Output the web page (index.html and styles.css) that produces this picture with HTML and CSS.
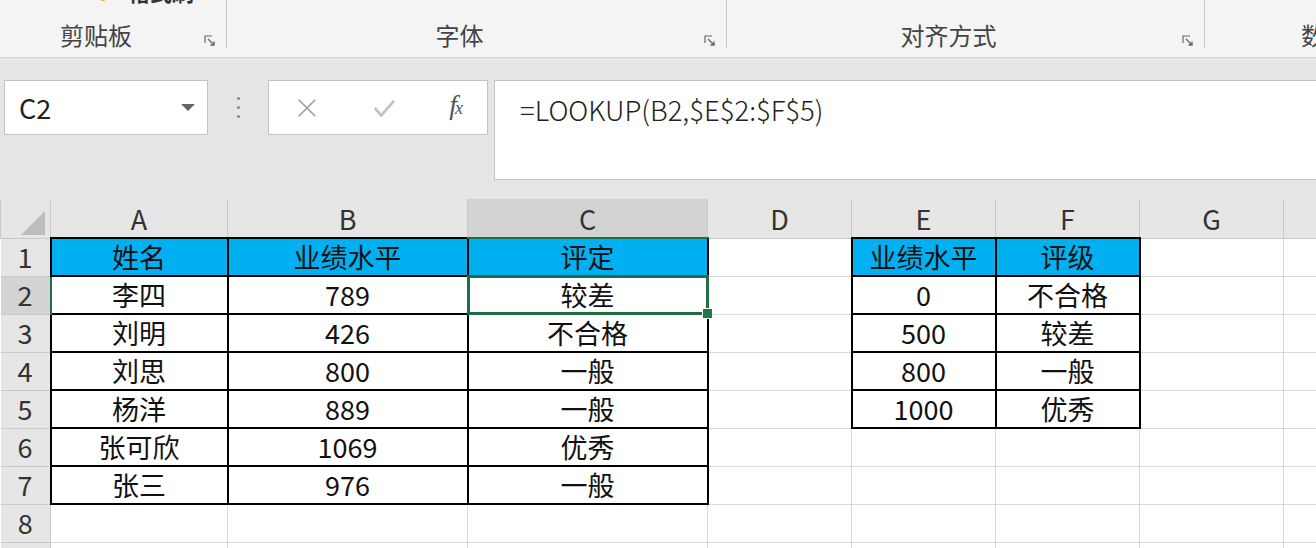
FILE: index.html
```html
<!DOCTYPE html>
<html>
    <head>
        <title>LOOKUP</title>
        <meta charset="UTF-8">
        <link rel="stylesheet" href="styles.css">
    </head>
    <body>
        <header class="ribbon">
            <div class="group group-clip">
                <div class="cut-text"><span class="cut-dot"></span>格式刷</div>
                <div class="group-label">剪贴板</div>
                <svg class="launcher" viewBox="0 0 12 12"><path d="M1 8V1h7" fill="none" stroke="#666" stroke-width="1.2"/><path d="M4 4l6 6M10 6.5V10H6.5" fill="none" stroke="#666" stroke-width="1.4"/></svg>
            </div>
            <div class="group group-font">
                <div class="group-label">字体</div>
                <svg class="launcher" viewBox="0 0 12 12"><path d="M1 8V1h7" fill="none" stroke="#666" stroke-width="1.2"/><path d="M4 4l6 6M10 6.5V10H6.5" fill="none" stroke="#666" stroke-width="1.4"/></svg>
            </div>
            <div class="group group-align">
                <div class="group-label">对齐方式</div>
                <svg class="launcher" viewBox="0 0 12 12"><path d="M1 8V1h7" fill="none" stroke="#666" stroke-width="1.2"/><path d="M4 4l6 6M10 6.5V10H6.5" fill="none" stroke="#666" stroke-width="1.4"/></svg>
            </div>
            <div class="group group-more">
                <div class="group-label">数字</div>
            </div>
        </header>

        <section class="formula-area">
            <div class="name-box">
                <span>C2</span>
                <span class="drop"></span>
            </div>
            <div class="grip"><i></i><i></i><i></i></div>
            <div class="fx-buttons">
                <svg class="btn-icon" viewBox="0 0 24 24"><path d="M3 3l18 18M21 3L3 21" stroke="#9a9a9a" stroke-width="1.6" fill="none"/></svg>
                <svg class="btn-icon" viewBox="0 0 24 24"><path d="M2 12l7 8L23 4" stroke="#c4c4c4" stroke-width="3" fill="none"/></svg>
                <span class="fx">f<sub>x</sub></span>
            </div>
            <div class="formula-box">=LOOKUP(B2,$E$2:$F$5)</div>
        </section>

        <table class="sheet">
            <colgroup>
                <col class="c-row"><col class="c-a"><col class="c-b"><col class="c-c">
                <col class="c-std"><col class="c-std"><col class="c-std"><col class="c-std"><col class="c-std">
            </colgroup>
            <tr class="col-head">
                <th class="corner"><span class="tri"></span></th>
                <th>A</th><th>B</th><th class="sel-col">C</th><th>D</th><th>E</th><th>F</th><th>G</th><th></th>
            </tr>
            <tr>
                <th class="row-head">1</th>
                <td class="d hd">姓名</td><td class="d hd">业绩水平</td><td class="d hd">评定</td>
                <td></td><td class="d hd">业绩水平</td><td class="d hd">评级</td><td></td><td></td>
            </tr>
            <tr>
                <th class="row-head sel-row">2</th>
                <td class="d">李四</td><td class="d">789</td><td class="d active">较差</td>
                <td></td><td class="d">0</td><td class="d">不合格</td><td></td><td></td>
            </tr>
            <tr>
                <th class="row-head">3</th>
                <td class="d">刘明</td><td class="d">426</td><td class="d">不合格</td>
                <td></td><td class="d">500</td><td class="d">较差</td><td></td><td></td>
            </tr>
            <tr>
                <th class="row-head">4</th>
                <td class="d">刘思</td><td class="d">800</td><td class="d">一般</td>
                <td></td><td class="d">800</td><td class="d">一般</td><td></td><td></td>
            </tr>
            <tr>
                <th class="row-head">5</th>
                <td class="d">杨洋</td><td class="d">889</td><td class="d">一般</td>
                <td></td><td class="d">1000</td><td class="d">优秀</td><td></td><td></td>
            </tr>
            <tr>
                <th class="row-head">6</th>
                <td class="d">张可欣</td><td class="d">1069</td><td class="d">优秀</td>
                <td></td><td></td><td></td><td></td><td></td>
            </tr>
            <tr>
                <th class="row-head">7</th>
                <td class="d">张三</td><td class="d">976</td><td class="d">一般</td>
                <td></td><td></td><td></td><td></td><td></td>
            </tr>
            <tr>
                <th class="row-head">8</th>
                <td></td><td></td><td></td><td></td><td></td><td></td><td></td><td></td>
            </tr>
            <tr>
                <th class="row-head"></th>
                <td></td><td></td><td></td><td></td><td></td><td></td><td></td><td></td>
            </tr>
        </table>
    </body>
</html>
```

FILE: styles.css
```css
* {
    box-sizing: border-box;
}

body {
    margin: 0;
    width: 1316px;
    height: 548px;
    overflow: hidden;
    background: #e6e6e6;
    font-family: "Noto Sans CJK SC", "Liberation Sans", sans-serif;
    color: #111;
}

/* Ribbon strip */
.ribbon {
    display: flex;
    height: 58px;
    background: #f4f4f4;
    border-bottom: 1px solid #d4d4d4;
    overflow: hidden;
}

.group {
    position: relative;
    flex: none;
    display: flex;
    flex-direction: column;
    justify-content: flex-end;
    height: 48px;
    border-right: 1px solid #c9c9c9;
    padding-right: 34px;
}

.group-clip { width: 227px; }
.group-font { width: 500px; }
.group-align { width: 478px; }
.group-more { width: 200px; border-right: none; padding-left: 96px; padding-right: 0; }

.group-label {
    text-align: center;
    font-size: 24px;
    line-height: 28px;
    color: #444;
    margin-bottom: -1px;
}

.group-more .group-label {
    text-align: left;
}

.cut-text {
    position: absolute;
    top: -25px;
    left: 100px;
    font-size: 22px;
    color: #333;
    font-weight: bold;
}

.cut-dot {
    display: inline-block;
    width: 6px;
    height: 6px;
    margin-right: 22px;
    background: #e0b43a;
    border-radius: 50%;
}

.launcher {
    position: absolute;
    right: 10px;
    bottom: 1px;
    width: 12px;
    height: 12px;
}

/* Name box + formula bar */
.formula-area {
    display: flex;
    align-items: flex-start;
    height: 141px;
    padding: 22px 0 0 4px;
}

.formula-area > * {
    flex: none;
}

.name-box {
    display: flex;
    align-items: center;
    justify-content: space-between;
    width: 204px;
    height: 55px;
    padding: 0 12px 0 14px;
    background: #fff;
    border: 1px solid #c3c3c3;
    font-size: 27px;
    color: #222;
}

.drop {
    width: 0;
    height: 0;
    border-left: 7px solid transparent;
    border-right: 7px solid transparent;
    border-top: 7px solid #666;
}

.grip {
    display: flex;
    flex-direction: column;
    justify-content: center;
    gap: 6px;
    width: 60px;
    height: 55px;
    align-items: center;
}

.grip i {
    width: 3px;
    height: 3px;
    background: #888;
    border-radius: 50%;
}

.fx-buttons {
    display: flex;
    align-items: center;
    justify-content: space-between;
    width: 220px;
    height: 55px;
    padding: 0 24px 0 27px;
    background: #fff;
    border: 1px solid #c3c3c3;
}

.btn-icon {
    width: 22px;
    height: 22px;
}

.fx {
    font-family: "Liberation Serif", serif;
    font-style: italic;
    font-size: 28px;
    color: #555;
    margin-top: -6px;
}

.fx sub {
    font-size: 18px;
    vertical-align: baseline;
    margin-left: -2px;
}

.formula-box {
    width: 850px;
    height: 100px;
    margin-left: 6px;
    padding: 8px 0 0 25px;
    background: #fff;
    border: 1px solid #c3c3c3;
    font-size: 27.5px;
    font-weight: 300;
    color: #222;
}

/* Worksheet grid */
.sheet {
    border-collapse: collapse;
    table-layout: fixed;
    width: 1427px;
    background: #fff;
}

.c-row { width: 50px; }
.c-a { width: 177px; }
.c-b { width: 240px; }
.c-c { width: 240px; }
.c-std { width: 144px; }

.sheet td,
.sheet th {
    height: 38px;
    padding: 0;
    border: 1px solid #d9d9d9;
    text-align: center;
    font-size: 27px;
    font-weight: 400;
    line-height: 36px;
    white-space: nowrap;
    overflow: visible;
}

.col-head th {
    height: 37px;
    background: #e6e6e6;
    border-color: #c9c9c9;
    border-top: none;
    color: #333;
    padding-top: 2px;
}

.col-head .sel-col {
    background: #d3d3d3;
    border-bottom: 2px solid #1f6e43;
}

.sheet .row-head {
    background: #e6e6e6;
    border-color: #c9c9c9;
    border-left: none;
    color: #333;
}

.sheet .sel-row {
    background: #d3d3d3;
    border-right: 2px solid #1f6e43;
}

.corner {
    position: relative;
}

.tri {
    position: absolute;
    right: 5px;
    bottom: 3px;
    width: 0;
    height: 0;
    border-left: 24px solid transparent;
    border-bottom: 24px solid #bdbdbd;
}

.sheet td.d {
    border: 2px solid #000;
}

.sheet td.hd {
    background: #00b0f0;
}

.sheet td.active {
    position: relative;
}

.active::after {
    content: "";
    position: absolute;
    inset: -2px;
    border: 3px solid #1f6e43;
}

.active::before {
    content: "";
    position: absolute;
    right: -6px;
    bottom: -6px;
    width: 9px;
    height: 9px;
    background: #1f7a46;
    border: 1px solid #fff;
    z-index: 1;
}
```
